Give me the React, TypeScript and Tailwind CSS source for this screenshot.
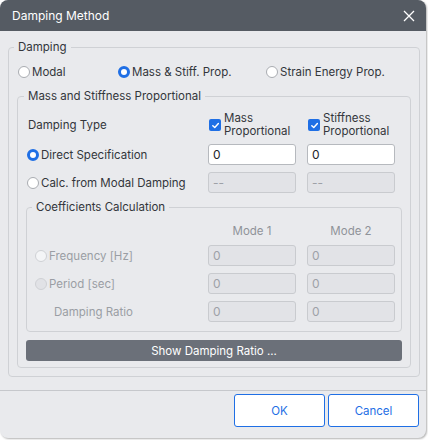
import React from "react";

const FONT = { fontFamily: "Inter, 'Noto Sans', sans-serif" };

function Radio({ checked = false, disabled = false, light = false }: { checked?: boolean; disabled?: boolean; light?: boolean }) {
  if (checked) {
    return <span className="inline-block w-[12px] h-[12px] rounded-full border-[3.5px] border-[#1f6fe5] bg-white shrink-0" />;
  }
  if (disabled) {
    return (
      <span
        className={
          "inline-block w-[12px] h-[12px] rounded-full border border-[#cfd1d5] shrink-0 " +
          (light ? "bg-[#f4f5f7]" : "bg-[#e1e2e6]")
        }
      />
    );
  }
  return <span className="inline-block w-[12px] h-[12px] rounded-full border border-[#a9acb1] bg-white shrink-0" />;
}

function Checkbox() {
  return (
    <span className="inline-flex items-center justify-center w-[12px] h-[12px] rounded-[2px] bg-[#1f6fe5] shrink-0">
      <svg width="9" height="9" viewBox="0 0 10 10">
        <path d="M2 5.2 L4.2 7.3 L8.2 2.8" fill="none" stroke="white" strokeWidth="1.6" strokeLinecap="round" strokeLinejoin="round" />
      </svg>
    </span>
  );
}

function Input({ value, disabled = false }: { value: string; disabled?: boolean }) {
  return (
    <div
      className={
        "w-[88px] h-[21px] rounded-[3px] border flex items-center pl-[4px] text-[12px] " +
        (disabled
          ? "bg-[#e2e3e7] border-[#c9cbcf] text-[#9ea1a7]"
          : "bg-white border-[#b6b9be] text-[#222428]")
      }
    >
      {value}
    </div>
  );
}

function TwoLine({ a, b }: { a: string; b: string }) {
  return (
    <div className="flex flex-col whitespace-nowrap">
      <span className="block h-[13px] leading-[13px]">{a}</span>
      <span className="block h-[13px] leading-[13px]">{b}</span>
    </div>
  );
}

export default function App() {
  return (
    <div className="w-[428px] h-[440px] bg-white" style={FONT}>
      <div className="w-[426px] h-[438px] rounded-[8px] bg-[#e9eaed] overflow-hidden shadow-[1px_1px_2px_rgba(0,0,0,0.3)] flex flex-col text-[11.5px] leading-[16px] text-[#33363b]">
        {/* Title bar */}
        <div className="h-[31px] bg-[#555b63] flex items-center justify-between pl-[12px] pr-[11px] shrink-0">
          <span className="text-white text-[12px]">Damping Method</span>
          <svg width="12" height="12" viewBox="0 0 12 12">
            <path d="M1 1 L11 11 M11 1 L1 11" stroke="white" strokeWidth="1.3" />
          </svg>
        </div>

        {/* Outer group */}
        <fieldset className="mt-[8px] ml-[8px] w-[412px] border border-[#cfd1d5] rounded-[4px] pl-[5px] pr-[8px] pt-[9px] pb-[8px]">
          <legend className="px-[4px] leading-[16px]">Damping</legend>
          <div className="flex items-center h-[16px] pl-[4px]">
            <div className="w-[100px] flex items-center gap-[2px]">
              <Radio />
              <span>Modal</span>
            </div>
            <div className="w-[148px] flex items-center gap-[2px]">
              <Radio checked />
              <span>Mass &amp; Stiff. Prop.</span>
            </div>
            <div className="flex items-center gap-[2px]">
              <Radio />
              <span>Strain Energy Prop.</span>
            </div>
          </div>

          {/* Mass & Stiffness */}
          <fieldset className="mt-[8px] ml-[3px] w-[394px] border border-[#cfd1d5] rounded-[4px] pl-[6px] pr-[6px] pt-[8px] pb-[6px]">
            <legend className="px-[4px] leading-[16px]">Mass and Stiffness Proportional</legend>

            <div className="grid grid-cols-[184px_99px_88px] items-center">
              <span className="pl-[4px]">Damping Type</span>
              <div className="flex items-center gap-[3px] pl-[1px]">
                <Checkbox />
                <TwoLine a="Mass" b="Proportional" />
              </div>
              <div className="flex items-center gap-[3px] pl-[1px]">
                <Checkbox />
                <TwoLine a="Stiffness" b="Proportional" />
              </div>
            </div>

            <div className="mt-[6px] grid grid-cols-[184px_99px_88px] items-center">
              <div className="flex items-center gap-[2px] pl-[3px]">
                <Radio checked />
                <span>Direct Specification</span>
              </div>
              <Input value="0" />
              <Input value="0" />
            </div>

            <div className="mt-[7px] grid grid-cols-[184px_99px_88px] items-center">
              <div className="flex items-center gap-[2px] pl-[3px]">
                <Radio />
                <span>Calc. from Modal Damping</span>
              </div>
              <Input value="--" disabled />
              <Input value="--" disabled />
            </div>

            {/* Coefficients */}
            <fieldset className="mt-[6px] ml-[2px] w-[376px] border border-[#cfd1d5] rounded-[4px] pl-[5px] pr-[5px] pt-[8px] pb-[9px]">
              <legend className="px-[4px] leading-[16px]">Coefficients Calculation</legend>
              <div className="grid grid-cols-[176px_99px_88px] items-center text-[#8f9399]">
                <span />
                <span className="w-[88px] text-center">Mode 1</span>
                <span className="text-center">Mode 2</span>
              </div>
              <div className="mt-[6px] grid grid-cols-[176px_99px_88px] items-center text-[#9a9ea4]">
                <div className="flex items-center gap-[2px] pl-[3px]">
                  <Radio disabled light />
                  <span>Frequency [Hz]</span>
                </div>
                <Input value="0" disabled />
                <Input value="0" disabled />
              </div>
              <div className="mt-[7px] grid grid-cols-[176px_99px_88px] items-center text-[#9a9ea4]">
                <div className="flex items-center gap-[2px] pl-[3px]">
                  <Radio disabled />
                  <span>Period [sec]</span>
                </div>
                <Input value="0" disabled />
                <Input value="0" disabled />
              </div>
              <div className="mt-[7px] grid grid-cols-[176px_99px_88px] items-center text-[#9a9ea4]">
                <span className="pl-[22px]">Damping Ratio</span>
                <Input value="0" disabled />
                <Input value="0" disabled />
              </div>
            </fieldset>

            <div className="mt-[8px] ml-[2px] w-[376px] h-[21px] rounded-[3px] bg-[#6b7079] text-white flex items-center justify-center">
              Show Damping Ratio ...
            </div>
          </fieldset>
        </fieldset>

        {/* Footer */}
        <div className="mt-[13px] border-t border-[#c6c8cc] pt-[3px] pr-[7px] flex justify-end gap-[3px]">
          <div className="w-[91px] h-[33px] rounded-[3px] border border-[#1f6fe5] bg-white text-[#1f6fe5] flex items-center justify-center">
            OK
          </div>
          <div className="w-[91px] h-[33px] rounded-[3px] border border-[#1f6fe5] bg-white text-[#1f6fe5] flex items-center justify-center">
            Cancel
          </div>
        </div>
      </div>
    </div>
  );
}
